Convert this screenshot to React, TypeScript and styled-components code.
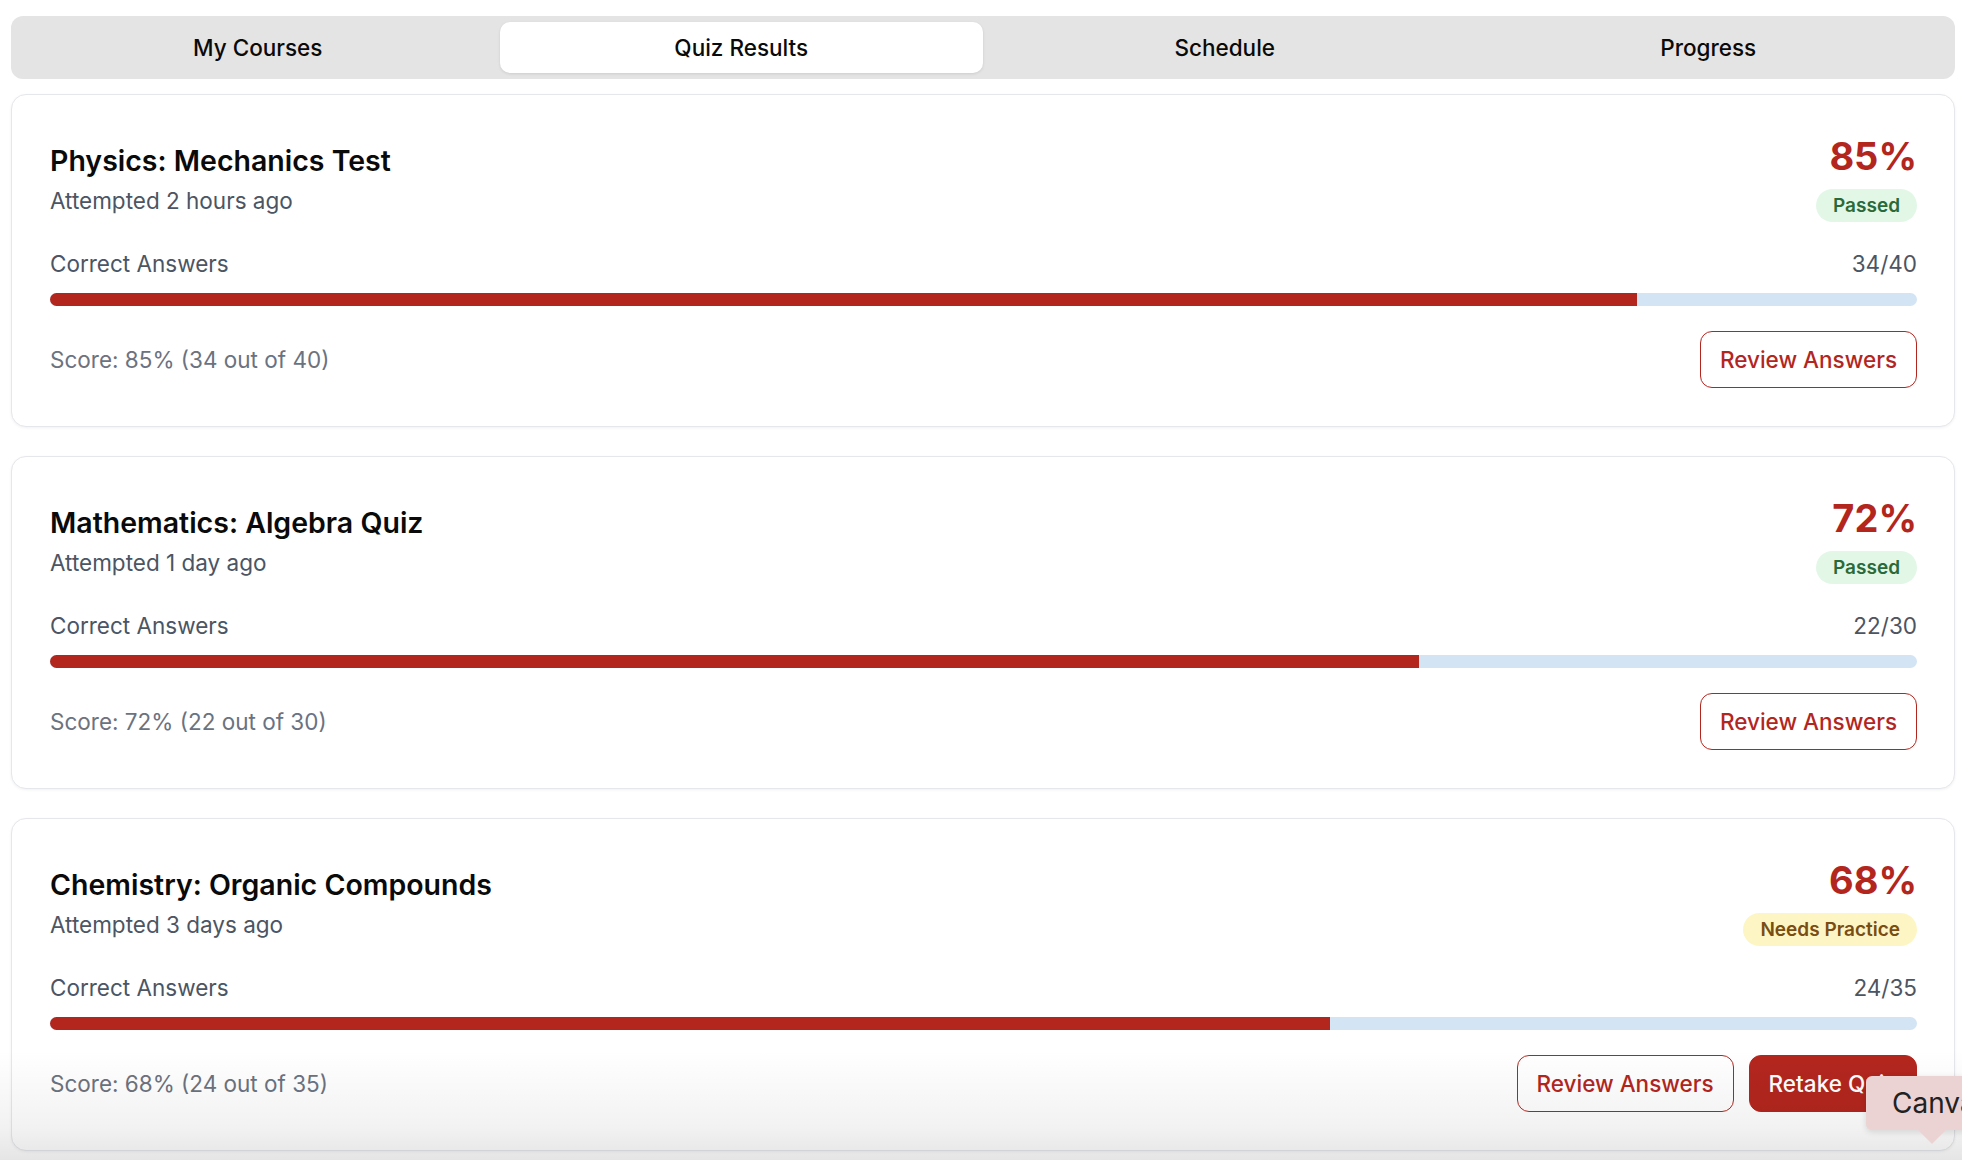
import React from "react";
import styled, { createGlobalStyle } from "styled-components";

const GlobalStyle = createGlobalStyle`
  html, body {
    margin: 0;
    padding: 0;
    background: #ffffff;
    font-family: Inter, "Noto Sans", Arial, sans-serif;
    color: #0a0a0a;
    overflow: hidden;
  }
  * { box-sizing: border-box; }
`;

const Page = styled.div`
  position: relative;
  width: 1962px;
  height: 1160px;
  overflow: hidden;
  padding: 16px 7px 0 11px;
`;

const TabBar = styled.div`
  display: grid;
  grid-template-columns: repeat(4, 1fr);
  height: 63px;
  padding: 6px 5px;
  background: #e4e4e4;
  border-radius: 12px;
`;

const Tab = styled.div<{ $active?: boolean }>`
  display: flex;
  align-items: center;
  justify-content: center;
  font-size: 22.5px;
  font-weight: 500;
  color: #0a0a0a;
  border-radius: 10px;
  background: ${(p) => (p.$active ? "#ffffff" : "transparent")};
  box-shadow: ${(p) => (p.$active ? "0 1px 3px rgba(0,0,0,0.10)" : "none")};
`;

const CardList = styled.div`
  display: flex;
  flex-direction: column;
  gap: 29px;
  margin-top: 15px;
`;

const Card = styled.div`
  height: 333px;
  border: 1px solid #e5e7eb;
  border-radius: 15px;
  background: #fff;
  box-shadow: 0 1px 3px rgba(0,0,0,0.06);
  padding: 38px 37px 38px 38px;
  display: flex;
  flex-direction: column;
`;

const Header = styled.div`
  display: flex;
  align-items: center;
  justify-content: space-between;
  margin-bottom: 28px;
`;

const TitleBlock = styled.div`
  display: flex;
  flex-direction: column;
  gap: 6px;
  padding-top: 5px;
`;

const Title = styled.div`
  font-size: 28.5px;
  line-height: 36px;
  font-weight: 600;
  color: #0a0a0a;
`;

const Subtitle = styled.div`
  font-size: 22.5px;
  line-height: 32px;
  color: #4b5563;
`;

const ScoreBlock = styled.div`
  display: flex;
  flex-direction: column;
  align-items: flex-end;
  gap: 10px;
`;

const Percent = styled.div`
  font-size: 38px;
  line-height: 46px;
  font-weight: 700;
  color: #b3261e;
`;

const Badge = styled.div<{ $tone: "pass" | "warn" }>`
  height: 33px;
  display: flex;
  align-items: center;
  padding: 0 17px;
  border-radius: 999px;
  font-size: 19px;
  font-weight: 600;
  background: ${(p) => (p.$tone === "pass" ? "#e2f7e6" : "#fdf6c4")};
  color: ${(p) => (p.$tone === "pass" ? "#2a6a3a" : "#7a4d12")};
`;

const StatRow = styled.div`
  display: flex;
  justify-content: space-between;
  font-size: 22.5px;
  line-height: 28px;
  color: #4b5563;
  margin-bottom: 15px;
`;

const Track = styled.div`
  height: 13px;
  border-radius: 999px;
  background: #d3e5f5;
  overflow: hidden;
`;

const Fill = styled.div`
  height: 100%;
  background: #b3261e;
`;

const Footer = styled.div`
  margin-top: 25px;
  display: flex;
  align-items: center;
  justify-content: space-between;
`;

const ScoreText = styled.div`
  font-size: 22.5px;
  color: #6b7280;
`;

const Actions = styled.div`
  display: flex;
  gap: 15px;
`;

const Button = styled.button<{ $primary?: boolean }>`
  height: 57px;
  padding: 0 19px;
  border-radius: 12px;
  font-family: inherit;
  font-size: 22.5px;
  font-weight: 500;
  cursor: pointer;
  border: 1.5px solid #b3261e;
  background: ${(p) => (p.$primary ? "#b3261e" : "#ffffff")};
  color: ${(p) => (p.$primary ? "#ffffff" : "#b3261e")};
`;

const Fade = styled.div`
  position: absolute;
  left: 0;
  right: 0;
  bottom: 0;
  height: 110px;
  background: linear-gradient(to bottom, rgba(0,0,0,0) 0%, rgba(0,0,0,0.05) 70%, rgba(0,0,0,0.1) 100%);
  pointer-events: none;
`;

const Tooltip = styled.div`
  position: absolute;
  left: 1866px;
  top: 1076px;
  height: 54px;
  padding: 0 20px 0 26px;
  display: flex;
  align-items: center;
  background: #ecd3d3;
  border-radius: 6px;
  box-shadow: 0 2px 6px rgba(0,0,0,0.12);
  font-size: 28px;
  color: #222;
  white-space: nowrap;
  &::after {
    content: "";
    position: absolute;
    left: 52px;
    bottom: -14px;
    border-left: 14px solid transparent;
    border-right: 14px solid transparent;
    border-top: 14px solid #ecd3d3;
  }
`;

type Quiz = {
  title: string;
  attempted: string;
  correct: number;
  total: number;
  pct: number;
  pass: boolean;
};

const quizzes: Quiz[] = [
  { title: "Physics: Mechanics Test", attempted: "Attempted 2 hours ago", correct: 34, total: 40, pct: 85, pass: true },
  { title: "Mathematics: Algebra Quiz", attempted: "Attempted 1 day ago", correct: 22, total: 30, pct: 72, pass: true },
  { title: "Chemistry: Organic Compounds", attempted: "Attempted 3 days ago", correct: 24, total: 35, pct: 68, pass: false },
];

export default function App() {
  return (
    <>
      <GlobalStyle />
      <Page>
        <TabBar>
          <Tab>My Courses</Tab>
          <Tab $active>Quiz Results</Tab>
          <Tab>Schedule</Tab>
          <Tab>Progress</Tab>
        </TabBar>
        <CardList>
          {quizzes.map((q) => (
            <Card key={q.title}>
              <Header>
                <TitleBlock>
                  <Title>{q.title}</Title>
                  <Subtitle>{q.attempted}</Subtitle>
                </TitleBlock>
                <ScoreBlock>
                  <Percent>{q.pct}%</Percent>
                  <Badge $tone={q.pass ? "pass" : "warn"}>{q.pass ? "Passed" : "Needs Practice"}</Badge>
                </ScoreBlock>
              </Header>
              <StatRow>
                <span>Correct Answers</span>
                <span>
                  {q.correct}/{q.total}
                </span>
              </StatRow>
              <Track>
                <Fill style={{ width: `${(q.correct / q.total) * 100}%` }} />
              </Track>
              <Footer>
                <ScoreText>
                  Score: {q.pct}% ({q.correct} out of {q.total})
                </ScoreText>
                <Actions>
                  <Button>Review Answers</Button>
                  {!q.pass && <Button $primary>Retake Quiz</Button>}
                </Actions>
              </Footer>
            </Card>
          ))}
        </CardList>
        <Fade />
        <Tooltip>Canvas</Tooltip>
      </Page>
    </>
  );
}
